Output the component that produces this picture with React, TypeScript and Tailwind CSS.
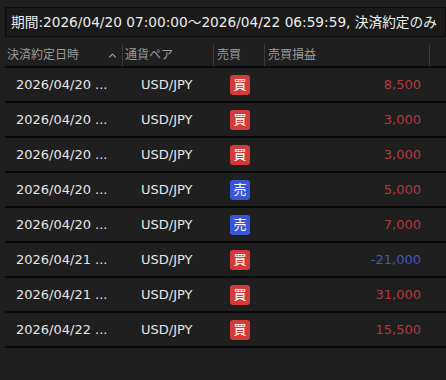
import { ChevronUp } from 'lucide-react'

type Trade = { date: string; pair: string; side: 'buy' | 'sell'; pl: string }

const trades: Trade[] = [
  { date: '2026/04/20 ...', pair: 'USD/JPY', side: 'buy', pl: '8,500' },
  { date: '2026/04/20 ...', pair: 'USD/JPY', side: 'buy', pl: '3,000' },
  { date: '2026/04/20 ...', pair: 'USD/JPY', side: 'buy', pl: '3,000' },
  { date: '2026/04/20 ...', pair: 'USD/JPY', side: 'sell', pl: '5,000' },
  { date: '2026/04/20 ...', pair: 'USD/JPY', side: 'sell', pl: '7,000' },
  { date: '2026/04/21 ...', pair: 'USD/JPY', side: 'buy', pl: '-21,000' },
  { date: '2026/04/21 ...', pair: 'USD/JPY', side: 'buy', pl: '31,000' },
  { date: '2026/04/22 ...', pair: 'USD/JPY', side: 'buy', pl: '15,500' },
]

const font = { fontFamily: '"DejaVu Sans", "Noto Sans CJK JP", sans-serif' }

export default function App() {
  return (
    <div className="w-[446px] h-[380px] overflow-hidden bg-[#1f1f1f] pt-[7px]" style={font}>
      <div className="ml-[5px] h-[30px] border border-[#0c0c0c] bg-[#1a1a1a] flex items-center pl-[5px] text-[13.7px] text-[#ececec] whitespace-nowrap overflow-hidden">
        期間:2026/04/20 07:00:00〜2026/04/22 06:59:59, 決済約定のみ
      </div>

      <div className="mt-[7px] ml-[5px] h-[22px] flex items-center text-[12px] text-[#9c9c9c]">
        <div className="w-[118px] h-full flex items-center justify-between pl-[2px] pr-[4px] border-r border-[#3a3a3a]">
          <span>決済約定日時</span>
          <ChevronUp size={11} strokeWidth={3} className="text-[#9c9c9c]" />
        </div>
        <div className="w-[91px] h-full flex items-center pl-[2px] border-r border-[#3a3a3a]">通貨ペア</div>
        <div className="w-[51px] h-full flex items-center pl-[3px] border-r border-[#3a3a3a]">売買</div>
        <div className="w-[165px] h-full flex items-center pl-[3px] border-r border-[#3a3a3a]">売買損益</div>
      </div>

      <div className="ml-[5px] border-t-2 border-[#0a0a0a]">
        {trades.map((t, i) => (
          <div key={i} className="h-[35px] flex items-center border-b-2 border-[#0a0a0a] text-[13px]">
            <div className="w-[118px] pl-[11px] text-[#e6e6e6]">{t.date}</div>
            <div className="w-[91px] pl-[18px] text-[#e6e6e6]">{t.pair}</div>
            <div className="w-[51px] pl-[16px]">
              <span
                className={
                  'inline-flex w-[20px] h-[20px] items-center justify-center rounded-[3px] text-white text-[13px] ' +
                  (t.side === 'buy' ? 'bg-[#d43a3a]' : 'bg-[#3a56d6]')
                }
              >
                {t.side === 'buy' ? '買' : '売'}
              </span>
            </div>
            <div
              className={
                'w-[156px] text-right ' + (t.pl.startsWith('-') ? 'text-[#4455b8]' : 'text-[#b03a3c]')
              }
            >
              {t.pl}
            </div>
          </div>
        ))}
      </div>
    </div>
  )
}
